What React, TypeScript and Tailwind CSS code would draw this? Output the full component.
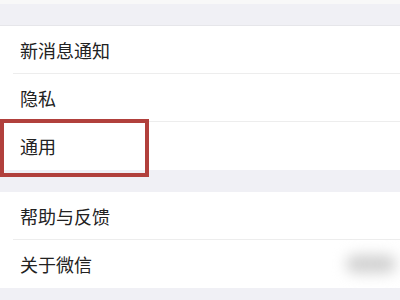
import React from "react";

const font = { fontFamily: '"Noto Sans CJK SC", "Noto Sans", sans-serif' };

function Row({ label, sep = true, children }: { label: string; sep?: boolean; children?: React.ReactNode }) {
  return (
    <div className="relative flex h-[48px] items-center bg-white pl-[20px]">
      <span className="text-[18px] leading-none text-[#222222]">{label}</span>
      {children}
      {sep && <div className="absolute bottom-0 left-[13px] right-0 h-px bg-[#ededed]" />}
    </div>
  );
}

export default function App() {
  return (
    <div className="h-[300px] w-[400px] overflow-hidden bg-[#f0f0f5]" style={font}>
      <div className="h-[4px] bg-[#f8f8f8]" />
      <div className="h-[22px] border-b border-[#e6e6ea] bg-[#f0f0f5]" />
      <Row label="新消息通知" />
      <Row label="隐私" />
      <div className="relative">
        <Row label="通用" sep={false} />
        <div className="pointer-events-none absolute left-0 top-[-3px] h-[58px] w-[149px] border-[4px] border-[#b1403c]" />
      </div>
      <div className="h-[22px] bg-[#f0f0f5]" />
      <Row label="帮助与反馈" />
      <Row label="关于微信" sep={false}>
        <div className="ml-auto mr-[4px] h-[18px] w-[50px] rounded-full bg-[#d0d0d0] blur-[7px]" />
      </Row>
      <div className="h-[14px] bg-[#f0f0f5]" />
    </div>
  );
}
